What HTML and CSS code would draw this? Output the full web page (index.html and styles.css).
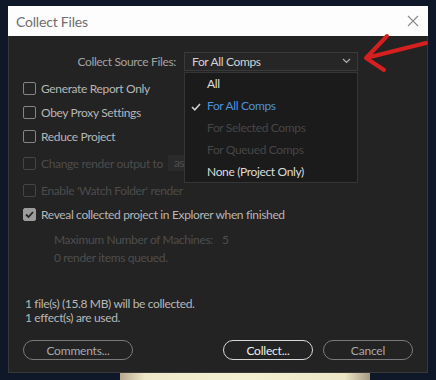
FILE: index.html
```html
<!DOCTYPE html>
<html>
<head>
  <meta name="viewport" content="width=device-width, initial-scale=1.0">
  <title>Collect Files</title>
  <link rel="stylesheet" href="styles.css">
</head>
<body>
  <div class="dialog">
    <div class="titlebar">
      <span class="title">Collect Files</span>
      <svg class="close" width="12" height="12" viewBox="0 0 12 12"><path d="M1 1L11 11M11 1L1 11" stroke="#8a8a8a" stroke-width="1.1" fill="none"/></svg>
    </div>
    <div class="content">
      <div class="source-row">
        <span class="source-label">Collect Source Files:</span>
        <div class="select-wrap">
          <div class="select">
            <span>For All Comps</span>
            <svg width="9" height="6" viewBox="0 0 9 6"><path d="M1 1L4.5 4.5L8 1" stroke="#b0b0b0" stroke-width="1.2" fill="none"/></svg>
          </div>
          <ul class="menu">
            <li class="item">All</li>
            <li class="item current"><svg class="tick" width="10" height="8" viewBox="0 0 10 8"><path d="M1 4L3.8 6.8L9 1" stroke="#cfcfcf" stroke-width="1.6" fill="none"/></svg>For All Comps</li>
            <li class="item off">For Selected Comps</li>
            <li class="item off">For Queued Comps</li>
            <li class="item">None (Project Only)</li>
          </ul>
        </div>
      </div>

      <div class="check-row first"><span class="box"></span>Generate Report Only</div>
      <div class="check-row"><span class="box"></span>Obey Proxy Settings</div>
      <div class="check-row"><span class="box"></span>Reduce Project</div>
      <div class="check-row off gap"><span class="box"></span>Change render output to <span class="field">ast</span></div>
      <div class="check-row off gap"><span class="box"></span>Enable 'Watch Folder' render</div>
      <div class="check-row"><span class="box checked"><svg width="9" height="7" viewBox="0 0 9 7"><path d="M1 3.5L3.5 6L8 1" stroke="#262626" stroke-width="1.8" fill="none"/></svg></span>Reveal collected project in Explorer when finished</div>

      <div class="machines">
        <div>Maximum Number of Machines:<span class="num">5</span></div>
        <div>0 render items queued.</div>
      </div>

      <div class="info">
        <div>1 file(s) (15.8 MB) will be collected.</div>
        <div>1 effect(s) are used.</div>
      </div>

      <div class="buttons">
        <button class="btn comments">Comments...</button>
        <span class="spacer"></span>
        <button class="btn primary">Collect...</button>
        <button class="btn cancel">Cancel</button>
      </div>
    </div>
  </div>
  <div class="backdrop-photo"></div>

  <svg class="arrow" width="436" height="80" viewBox="0 0 436 80">
    <path d="M426 43L366 58M366 58L387 36M366 58L384 70" stroke="#d61f1f" stroke-width="4" stroke-linecap="round" fill="none"/>
  </svg>
</body>
</html>
```

FILE: styles.css
```css
body {
  margin: 0;
  width: 436px;
  height: 380px;
  overflow: hidden;
  position: relative;
  background: #0e1828;
  font-family: "Lato", "Open Sans", sans-serif;
  font-size: 12px;
  letter-spacing: -0.35px;
}
.dialog {
  margin: 6px 8px 0 8px;
  width: 420px;
}
.titlebar {
  height: 30px;
  background: #fdfdfd;
  display: flex;
  align-items: center;
  justify-content: space-between;
  padding: 0 9px 0 8px;
}
.title {
  color: #6e6e6e;
  font-size: 14px;
  letter-spacing: -0.2px;
}
.content {
  background: #232323;
  border: 1px solid #383838;
  border-top: none;
  height: 336px;
  padding: 0 14px;
}
.source-row {
  display: flex;
  align-items: center;
  padding-top: 15px;
  height: 20px;
}
.source-label {
  width: 153px;
  text-align: right;
  color: #a2a2a2;
  margin-right: 8px;
}
.select-wrap {
  position: relative;
}
.select {
  width: 174px;
  height: 19px;
  box-sizing: border-box;
  border: 1px solid #3a3a3a;
  background: #262626;
  color: #d2d2d2;
  display: flex;
  align-items: center;
  justify-content: space-between;
  padding: 0 6px 0 7px;
}
.menu {
  position: absolute;
  top: 20px;
  left: 0;
  width: 174px;
  height: 111px;
  box-sizing: border-box;
  margin: 0;
  padding: 0;
  list-style: none;
  background: #1b1b1b;
  border: 1px solid #353535;
  z-index: 2;
}
.item {
  height: 22px;
  line-height: 22px;
  padding-left: 22px;
  color: #dcdcdc;
  position: relative;
}
.item.current {
  color: #4d91dc;
}
.item.off {
  color: #464646;
}
.tick {
  position: absolute;
  left: 6px;
  top: 8px;
}
.check-row {
  display: flex;
  align-items: center;
  height: 24px;
  color: #b6b6b6;
}
.check-row.first {
  margin-top: 5px;
}
.check-row.gap {
  margin-top: 3px;
}
.check-row.off {
  color: #4c4c4c;
}
.box {
  width: 13px;
  height: 13px;
  box-sizing: border-box;
  border: 1.5px solid #858585;
  border-radius: 2px;
  margin-right: 5px;
  display: flex;
  align-items: center;
  justify-content: center;
}
.check-row.off .box {
  border-color: #454545;
}
.box.checked {
  background: #9c9c9c;
  border-color: #9c9c9c;
}
.field {
  display: inline-block;
  width: 60px;
  height: 16px;
  line-height: 16px;
  margin-left: 5px;
  padding-left: 6px;
  background: #2a2a2a;
  color: #505050;
}
.machines {
  margin-top: 5px;
  padding-left: 31px;
  color: #4e4e4e;
  line-height: 18px;
}
.num {
  margin-left: 9px;
}
.info {
  margin-top: 30px;
  padding-left: 2px;
  color: #b8b8b8;
  line-height: 14px;
}
.buttons {
  display: flex;
  margin-top: 15px;
}
.spacer {
  flex: 1;
}
.btn {
  height: 20px;
  border-radius: 10px;
  background: transparent;
  border: 1px solid #7a7a7a;
  color: #a8a8a8;
  font-family: inherit;
  font-size: 12px;
  letter-spacing: -0.2px;
  padding: 0;
}
.comments {
  width: 110px;
}
.primary {
  width: 90px;
  border-color: #d8d8d8;
  color: #eeeeee;
}
.cancel {
  width: 90px;
  margin-left: 10px;
}
.backdrop-photo {
  margin-left: 120px;
  width: 250px;
  height: 8px;
  background: linear-gradient(90deg, #b8a890 0%, #efe9c8 10%, #f3f0d2 50%, #ece6c4 90%, #a89a86 100%);
}
.arrow {
  position: absolute;
  left: 0;
  top: 0;
}
```
